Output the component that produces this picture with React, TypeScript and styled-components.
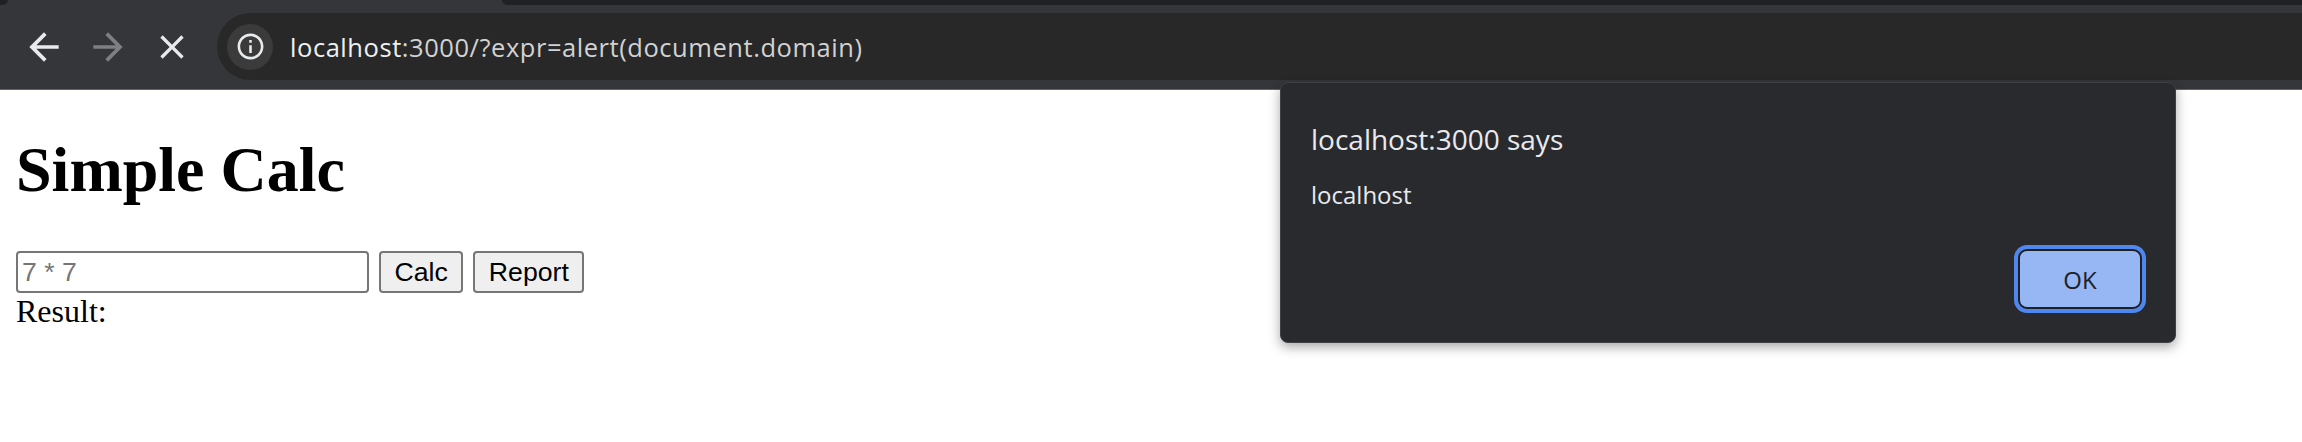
import React from 'react';
import styled, { createGlobalStyle } from 'styled-components';

const Global = createGlobalStyle`
  html, body { margin: 0; padding: 0; background: #ffffff; }
  body { width: 2302px; height: 442px; overflow: hidden; }
`;

const Window = styled.div`
  position: relative;
  width: 2302px;
  height: 442px;
  background: #ffffff;
  overflow: hidden;
`;

const TabStrip = styled.div`
  display: flex;
  height: 5px;
  background: #35363a;
`;

const FrameEdge = styled.div<{ $side: 'left' | 'right' }>`
  background: #202124;
  ${(p) =>
    p.$side === 'left'
      ? 'width: 8px; border-bottom-right-radius: 6px;'
      : 'flex: 1; border-bottom-left-radius: 6px;'}
`;

const ActiveTabFoot = styled.div`
  width: 494px;
`;

const Toolbar = styled.div`
  display: flex;
  align-items: center;
  height: 85px;
  box-sizing: border-box;
  padding: 0 0 1px 12px;
  background: #35363a;
  border-bottom: 1px solid #5f6368;
`;

const NavButton = styled.div<{ $dim?: boolean }>`
  display: flex;
  align-items: center;
  justify-content: center;
  width: 64px;
  height: 64px;
  color: ${(p) => (p.$dim ? '#7d7f83' : '#e8eaed')};
`;

const Omnibox = styled.div`
  flex: 1;
  align-self: flex-start;
  display: flex;
  align-items: center;
  height: 67px;
  margin: 8px 0 0 13px;
  padding-left: 10px;
  background: #282828;
  border-radius: 34px 0 0 34px;
`;

const InfoChip = styled.div`
  display: flex;
  align-items: center;
  justify-content: center;
  width: 46px;
  height: 46px;
  border-radius: 50%;
  background: #3b3b3b;
  color: #e8eaed;
`;

const UrlText = styled.div`
  margin-left: 17px;
  font-family: 'Open Sans', 'Noto Sans', sans-serif;
  font-size: 25.5px;
  letter-spacing: 0.55px;
  white-space: nowrap;
  color: #d0d2d4;
`;

const UrlHost = styled.span`
  color: #eef0f2;
`;

const Page = styled.main`
  padding: 0 16px;
  font-family: 'Liberation Serif', 'Times New Roman', serif;
  font-size: 32px;
  color: #000000;
`;

const Title = styled.h1`
  margin: 43px 0 44px;
  font-size: 64px;
  font-weight: bold;
  line-height: normal;
`;

const FormRow = styled.div`
  display: flex;
  align-items: flex-start;
  gap: 10px;
`;

const ExprInput = styled.input`
  box-sizing: border-box;
  width: 353px;
  height: 42px;
  margin: 0;
  padding: 0 4px;
  border: 2px solid #767676;
  border-radius: 4px;
  background: #ffffff;
  font-family: 'Liberation Sans', Arial, sans-serif;
  font-size: 26.67px;
  color: #000000;
  outline: none;
  &::placeholder {
    color: #757575;
  }
`;

const FormButton = styled.button`
  box-sizing: border-box;
  height: 42px;
  margin: 0;
  padding: 0 13.5px;
  border: 2px solid #767676;
  border-radius: 4px;
  background: #efefef;
  font-family: 'Liberation Sans', Arial, sans-serif;
  font-size: 26.67px;
  color: #000000;
`;

const Result = styled.div`
  line-height: normal;
`;

const Dialog = styled.div`
  position: absolute;
  left: 1280px;
  top: 82px;
  width: 896px;
  height: 261px;
  box-sizing: border-box;
  display: flex;
  flex-direction: column;
  padding: 37px 33px 33px 30px;
  background: #292a2d;
  border: 1px solid #404145;
  border-radius: 8px;
  box-shadow: 0 4px 12px rgba(0, 0, 0, 0.35);
  font-family: 'Open Sans', 'Noto Sans', sans-serif;
  color: #e8eaed;
`;

const DialogTitle = styled.div`
  font-size: 28px;
  line-height: 38px;
`;

const DialogMessage = styled.div`
  margin-top: 21px;
  font-size: 24px;
  line-height: 32px;
`;

const DialogActions = styled.div`
  margin-top: auto;
  display: flex;
  justify-content: flex-end;
`;

const OkButton = styled.button`
  box-sizing: border-box;
  width: 124px;
  height: 60px;
  margin: 0;
  padding: 0;
  border: 2px solid #1f2023;
  border-radius: 9px;
  outline: 4px solid #4f87ef;
  outline-offset: 0;
  background: #96b6f4;
  font-family: 'Open Sans', 'Noto Sans', sans-serif;
  font-size: 24px;
  color: #1f2023;
`;

const ArrowBack = () => (
  <svg width="44" height="44" viewBox="0 0 24 24" fill="currentColor">
    <path d="M20 11H7.83l5.59-5.59L12 4l-8 8 8 8 1.41-1.41L7.83 13H20v-2z" />
  </svg>
);

const ArrowForward = () => (
  <svg width="44" height="44" viewBox="0 0 24 24" fill="currentColor">
    <path d="M12 4l-1.41 1.41L16.17 11H4v2h12.17l-5.58 5.59L12 20l8-8z" />
  </svg>
);

const CloseIcon = () => (
  <svg width="40" height="40" viewBox="0 0 24 24" fill="currentColor">
    <path d="M19 6.41L17.59 5 12 10.59 6.41 5 5 6.41 10.59 12 5 17.59 6.41 19 12 13.41 17.59 19 19 17.59 13.41 12z" />
  </svg>
);

const InfoIcon = () => (
  <svg width="31" height="31" viewBox="0 0 24 24" fill="currentColor">
    <path d="M11 7h2v2h-2zm0 4h2v6h-2zm1-9C6.48 2 2 6.48 2 12s4.48 10 10 10 10-4.48 10-10S17.52 2 12 2zm0 18c-4.41 0-8-3.59-8-8s3.59-8 8-8 8 3.59 8 8-3.59 8-8 8z" />
  </svg>
);

export default function App() {
  return (
    <Window>
      <Global />
      <TabStrip>
        <FrameEdge $side="left" />
        <ActiveTabFoot />
        <FrameEdge $side="right" />
      </TabStrip>
      <Toolbar>
        <NavButton>
          <ArrowBack />
        </NavButton>
        <NavButton $dim>
          <ArrowForward />
        </NavButton>
        <NavButton>
          <CloseIcon />
        </NavButton>
        <Omnibox>
          <InfoChip>
            <InfoIcon />
          </InfoChip>
          <UrlText>
            <UrlHost>localhost</UrlHost>:3000/?expr=alert(document.domain)
          </UrlText>
        </Omnibox>
      </Toolbar>
      <Page>
        <Title>Simple Calc</Title>
        <FormRow>
          <ExprInput placeholder="7 * 7" />
          <FormButton>Calc</FormButton>
          <FormButton>Report</FormButton>
        </FormRow>
        <Result>Result:</Result>
      </Page>
      <Dialog>
        <DialogTitle>localhost:3000 says</DialogTitle>
        <DialogMessage>localhost</DialogMessage>
        <DialogActions>
          <OkButton>OK</OkButton>
        </DialogActions>
      </Dialog>
    </Window>
  );
}
